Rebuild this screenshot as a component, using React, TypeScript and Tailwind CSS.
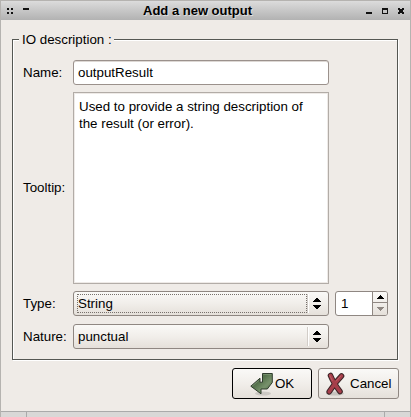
import React from "react";

const raised = "bg-linear-to-b from-[#faf9f7] via-[#f1eeea] to-[#e5e0da]";

function UpDown() {
  return (
    <svg width="8" height="11" viewBox="0 0 8 11" shapeRendering="crispEdges">
      <path d="M3 0h2v1h1v1h1v1h1v1H0V3h1V2h1V1h1zM0 7h8v1H7v1H6v1H5v1H3v-1H2V9H1V8H0z" fill="#000" />
    </svg>
  );
}

function Combo({ value, focused = false }: { value: string; focused?: boolean }) {
  return (
    <div className={`flex h-[25px] w-64 items-center rounded-[3px] border border-[#8f8782] pl-[3px] ${raised}`}>
      <div className={`flex h-[19px] w-[230px] items-center border ${focused ? "border-dotted border-[#77716c]" : "border-transparent"}`}>
        <span>{value}</span>
      </div>
      <div className="h-[19px] w-0.5 border-r border-l border-r-white border-l-[#d2cdc8]" />
      <div className="ml-[4px]"><UpDown /></div>
    </div>
  );
}

function EnterIcon() {
  return (
    <svg width="24" height="24" viewBox="0 0 24 24">
      <defs>
        <linearGradient id="enter" x1="0" y1="0" x2="1" y2="1">
          <stop offset="0" stopColor="#4f6a48" />
          <stop offset=".4" stopColor="#56734d" />
          <stop offset=".65" stopColor="#78926c" />
          <stop offset="1" stopColor="#3f5a39" />
        </linearGradient>
      </defs>
      <ellipse cx="13" cy="21.500" rx="8" ry="2" fill="#000" opacity=".12" />
      <path d="M12.500 1.500h9.800v9l-5 6.500h-6.300v4.800L.8 14.200l9.200-8v4h2.500z" fill="url(#enter)" stroke="#2f3c2d" strokeLinejoin="round" />
      <path d="M13.300 2.500h8M2 14.200l7.200-6" fill="none" stroke="#a1b398" strokeWidth=".8" opacity=".5" />
    </svg>
  );
}

function CrossIcon() {
  const strokes = "M5.500 3.500Q8.500 11 15 19.500M16.500 4Q10 10.500 4.200 19.800";
  return (
    <svg width="24" height="24" viewBox="0 0 24 24">
      <ellipse cx="10" cy="21.500" rx="9" ry="2" fill="#000" opacity=".14" />
      <path d={strokes} fill="none" stroke="#3a2426" strokeWidth="5.600" strokeLinecap="round" />
      <path d={strokes} fill="none" stroke="#a63e4a" strokeWidth="3.600" strokeLinecap="round" />
      <path d="M4.800 3.500l2.500 5M15.800 4l-4.500 5" fill="none" stroke="#d0747c" strokeWidth="1" strokeLinecap="round" opacity=".6" />
    </svg>
  );
}

export default function App() {
  return (
    <div className="flex h-[417px] w-[411px] flex-col overflow-hidden border-x border-t border-[#b5b3b0] bg-[#efebe7] font-['Liberation_Sans',Arial,sans-serif] text-[13.333px] leading-[17px] text-black">
      <header className="flex h-[19px] shrink-0 items-center bg-linear-to-b from-[#dcdcdc] to-[#b2b2b2] pr-[5px] pl-[6px]">
        <svg width="45" height="18" shapeRendering="crispEdges" fill="#111">
          <path d="M0 6h2v2H0zM4 6h2v2H4zM0 10h2v2H0zM4 10h2v2H4zM16 6h6v2h-6z" />
        </svg>
        <h1 className="-mt-px ml-[91px] grow text-[13px] font-bold whitespace-nowrap [text-shadow:1px_1px_0_#dedede]">Add a new output</h1>
        <svg width="39" height="18" shapeRendering="crispEdges" fill="#111">
          <path d="M0 10h6v2H0z" />
          <path fillRule="evenodd" d="M16 6h6v6h-6zM17 8v3h4V8z" />
          <path d="M32 6h2v1h2V6h2v2h-1v2h1v2h-2v-1h-2v1h-2v-2h1V8h-1z" />
        </svg>
      </header>

      <main className="flex h-[391px] shrink-0 flex-col pt-[11px] pr-[11px] pl-[11px]">
        <fieldset className="h-[329px] w-[386px] border border-[#555753] px-2.5 shadow-[1px_1px_0_#fff,inset_1px_1px_0_#fff]">
          <legend className="-ml-1 bg-[#efebe7] pr-0.5 pl-[3px]">IO description :</legend>
          <div className="grid grid-cols-[50px_256px_54px] items-center pt-3">
            <label>Name:</label>
            <div className="flex h-[25px] items-center rounded-[3px] border border-[#9b918c] bg-white pl-1 shadow-[inset_0_1px_0_#ddd8d4]">outputResult</div>
            <span />
            <label className="mt-[5px]">Tooltip:</label>
            <div className="mt-[7px] h-48 border border-[#b2aca7] bg-white pt-[5px] pl-[5px] shadow-[inset_1px_1px_0_#eeeae7,inset_-1px_-1px_0_#eeeae7]">
              Used to provide a string description of<br />the result (or error).
            </div>
            <span />
            <label className="mt-[7px]">Type:</label>
            <div className="mt-[7px]"><Combo value="String" focused /></div>
            <div className="mt-[7px] ml-1.5 flex h-[25px] w-[53px] overflow-hidden rounded-[3px] border border-[#8f8782] bg-white">
              <div className="flex w-9 items-center pl-[5px]">1</div>
              <div className={`flex grow flex-col border-l border-[#8f8782] ${raised}`}>
                <div className="flex h-[11px] items-center justify-center border-b border-[#8f8782]">
                  <svg width="7" height="4" shapeRendering="crispEdges"><path d="M3 0h1v1h1v1h1v1h1v1H0V3h1V2h1V1h1z" /></svg>
                </div>
                <div className="flex grow items-center justify-center">
                  <svg width="7" height="4" shapeRendering="crispEdges"><path d="M0 0h7v1H6v1H5v1H4v1H3V3H2V2H1V1H0z" fill="#8f8782" /></svg>
                </div>
              </div>
            </div>
            <label className="mt-2">Nature:</label>
            <div className="mt-2"><Combo value="punctual" /></div>
          </div>
        </fieldset>
        <div className="mt-2 flex justify-end gap-1.5">
          <button className={`flex h-[31px] w-20 items-center rounded-[3px] border border-black pl-[17px] ${raised}`}>
            <EnterIcon /><span className="ml-px">OK</span>
          </button>
          <button className={`flex h-[31px] w-[81px] items-center rounded-[3px] border border-[#8f8782] pl-[6px] ${raised}`}>
            <CrossIcon /><span className="ml-px">Cancel</span>
          </button>
        </div>
      </main>
      <footer className="flex h-1.5 shrink-0 border-t border-[#aaa] bg-[#d9d8d7]">
        <div className="w-[26px] border-r border-[#aaa]" />
        <div className="w-[358px] border-r border-[#aaa]" />
      </footer>
    </div>
  );
}
